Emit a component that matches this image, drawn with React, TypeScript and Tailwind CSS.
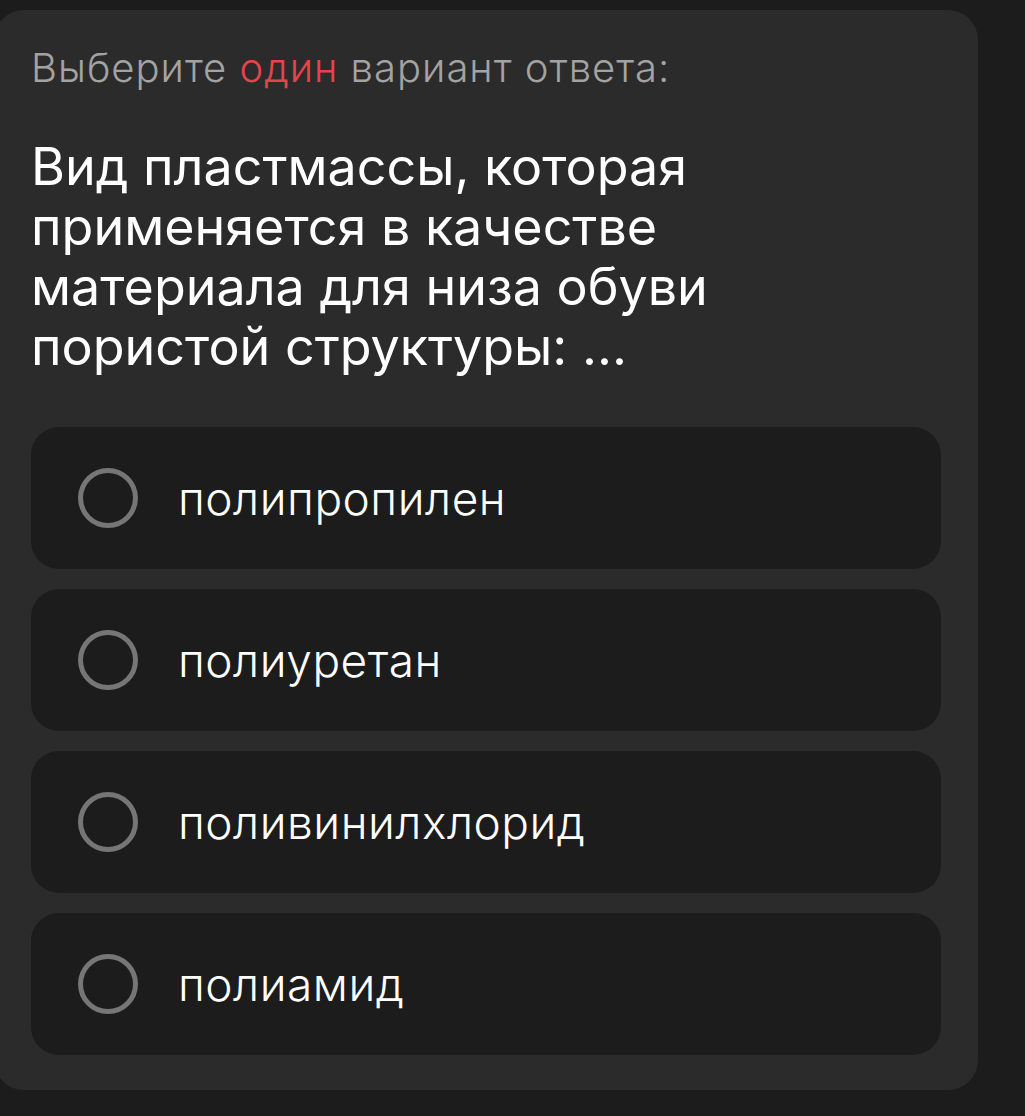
import React from "react";

const options = ["полипропилен", "полиуретан", "поливинилхлорид", "полиамид"];

function Radio() {
  return (
    <span className="block w-[60px] h-[60px] shrink-0 rounded-full border-[5px] border-[#767676]" />
  );
}

export default function App() {
  return (
    <div
      className="min-h-[1116px] w-[1025px] bg-[#1c1c1c] pt-[10px]"
      style={{ fontFamily: "Inter, 'Noto Sans', sans-serif" }}
    >
      <div className="-ml-[6px] w-[984px] rounded-[30px] bg-[#2b2b2b] px-[37px] pt-[38px] pb-[35px]">
        <p className="text-[40px] leading-[40px] font-light text-[#a3a3a3] tracking-[1px]">
          Выберите <span className="text-[#e8434b]">один</span> вариант ответа:
        </p>
        <h1 className="mt-[49px] text-[52px] leading-[60px] font-normal text-white">
          Вид пластмассы, которая применяется в качестве материала для низа обуви
          пористой структуры: ...
        </h1>
        <div className="mt-[50px] flex flex-col gap-[20px]">
          {options.map((o) => (
            <div
              key={o}
              className="flex h-[142px] items-center rounded-[28px] bg-[#1c1c1c] pl-[47px]"
            >
              <Radio />
              <span className="ml-[40px] text-[46px] font-light tracking-[0.5px] text-white">
                {o}
              </span>
            </div>
          ))}
        </div>
      </div>
    </div>
  );
}
